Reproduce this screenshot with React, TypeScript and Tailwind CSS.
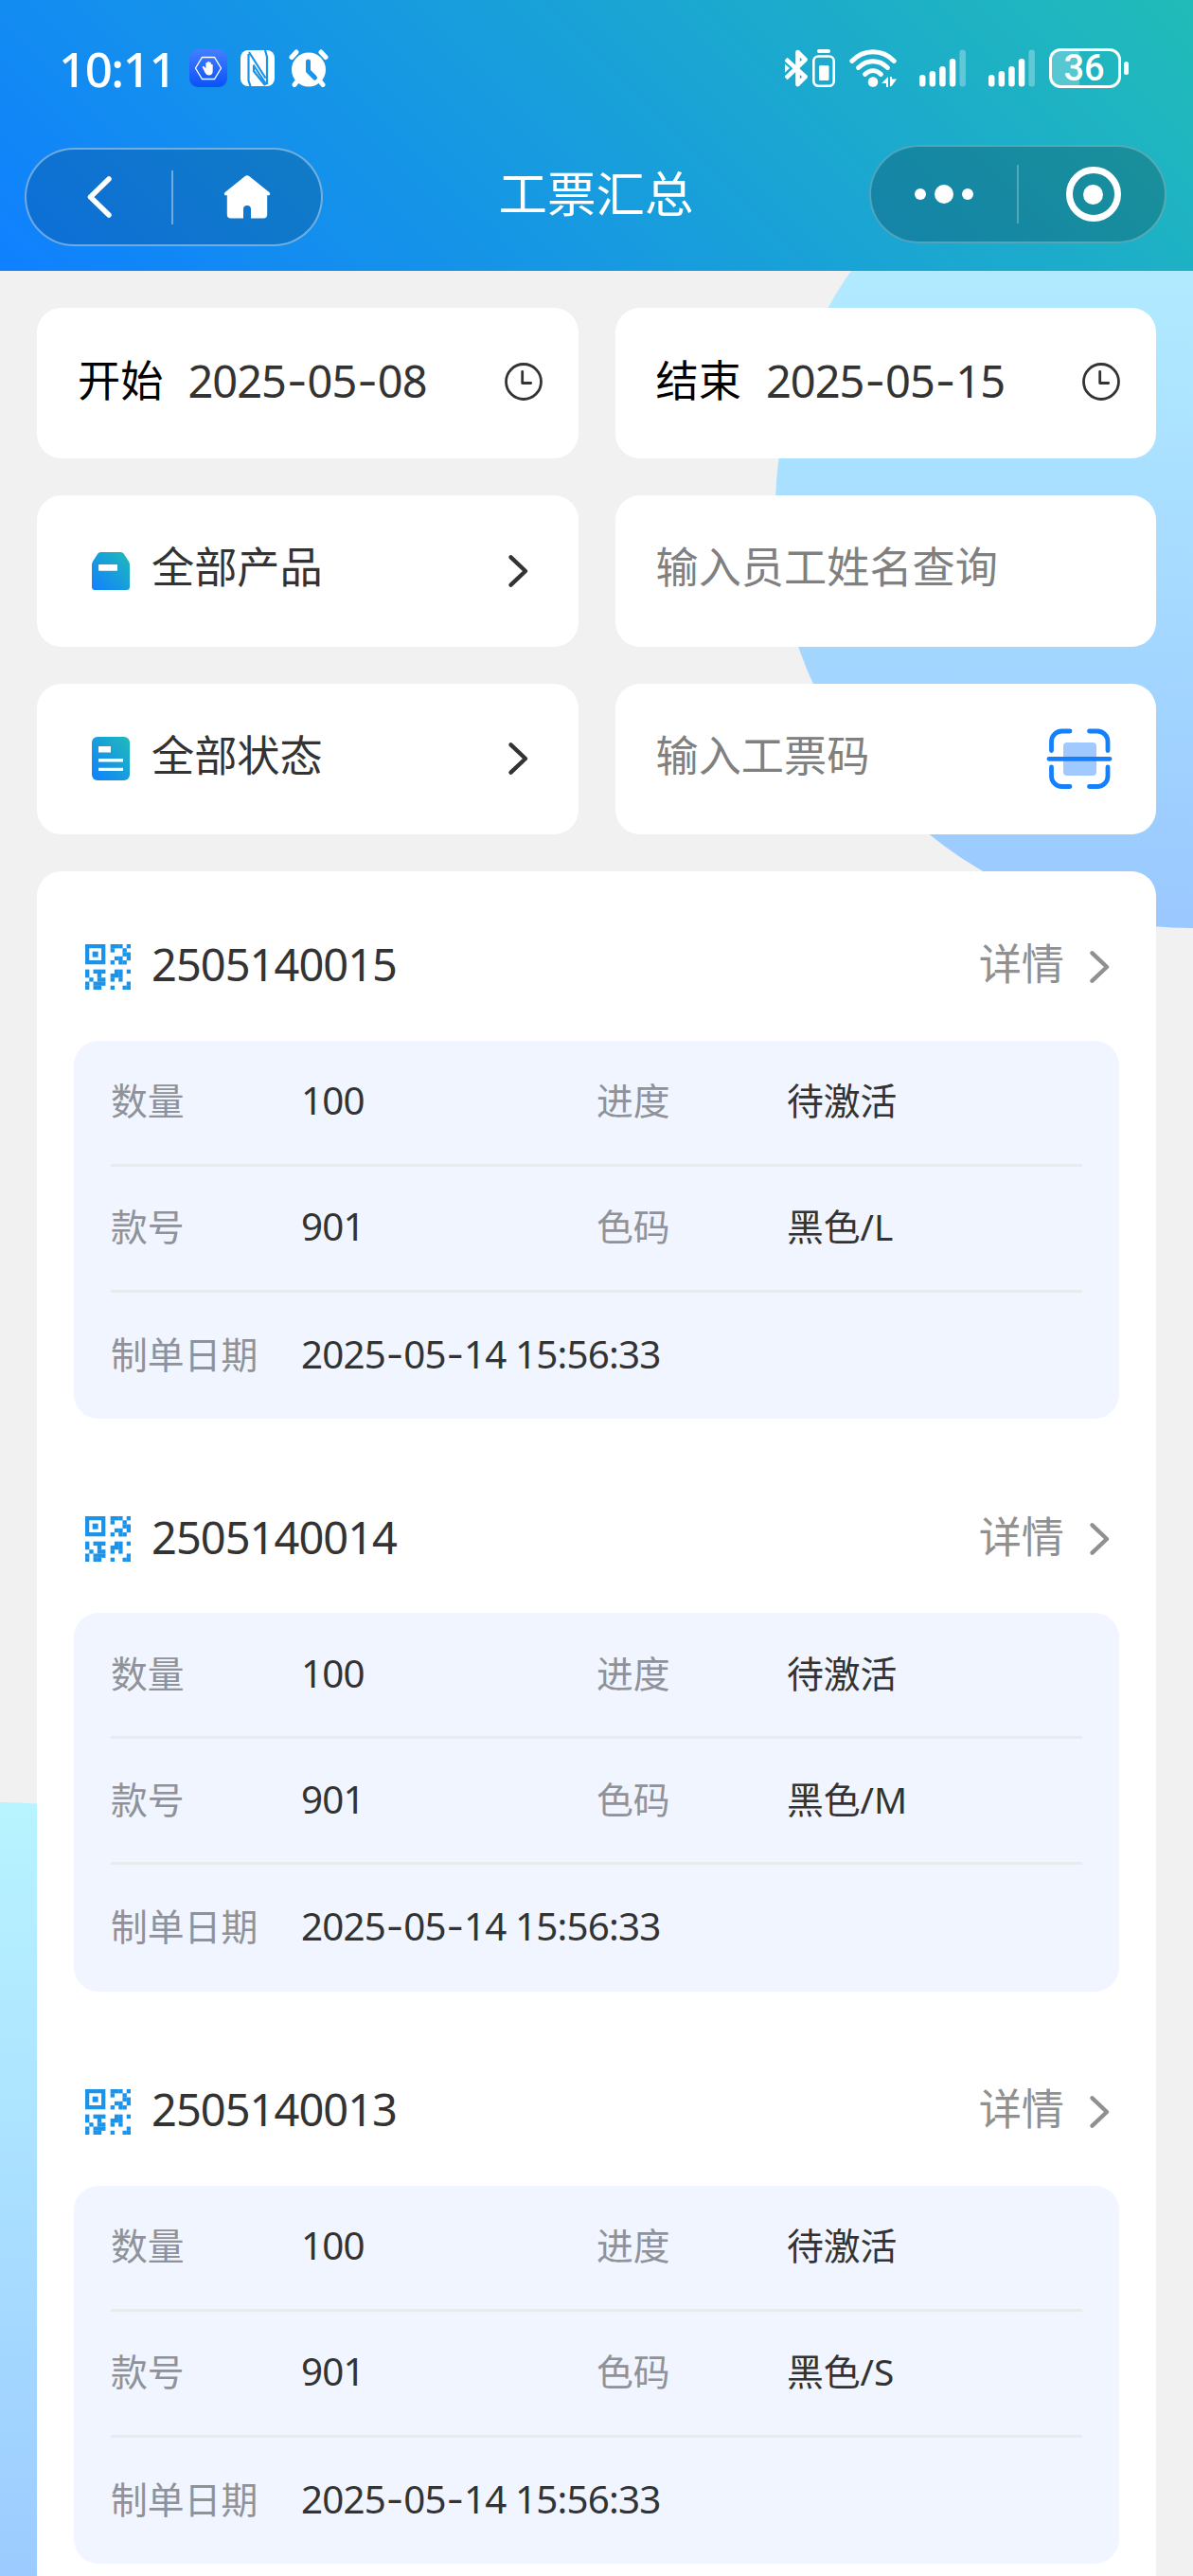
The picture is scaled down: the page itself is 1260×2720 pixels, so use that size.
import React from "react";

interface Ticket {
    code: string;
    quantity: string;
    progress: string;
    styleNo: string;
    colorSize: string;
    createdAt: string;
}

const tickets: Ticket[] = [
    {
        code: "2505140015",
        quantity: "100",
        progress: "待激活",
        styleNo: "901",
        colorSize: "黑色/L",
        createdAt: "2025-05-14 15:56:33",
    },
    {
        code: "2505140014",
        quantity: "100",
        progress: "待激活",
        styleNo: "901",
        colorSize: "黑色/M",
        createdAt: "2025-05-14 15:56:33",
    },
    {
        code: "2505140013",
        quantity: "100",
        progress: "待激活",
        styleNo: "901",
        colorSize: "黑色/S",
        createdAt: "2025-05-14 15:56:33",
    },
];

/**
 * The three data blocks of the QR glyph, one string per row of modules.
 */
const qrBlocks = [
    { x: 25, y: 0, rows: ["11101", "10010", "00011", "01101", "10110"] },
    { x: 0, y: 25, rows: ["10111", "10010", "01011", "10111", "10110"] },
    { x: 25, y: 25, rows: ["01101", "11100", "10100", "00001", "10011"] },
];

const QrIcon = () => (
    <svg className="h-[48px] w-[48px] shrink-0" viewBox="0 0 45 45" fill="#1b93e8">
        <path fillRule="evenodd" d="M0 0h20v20H0zM4 4v12h12V4z" />
        <rect x="7.2" y="7.2" width="5.6" height="5.6" />
        {qrBlocks.map((block) =>
            block.rows.map((row, r) =>
                row
                    .split("")
                    .map((cell, c) =>
                        cell === "1" ? (
                            <rect
                                key={`${block.x}-${block.y}-${r}-${c}`}
                                x={block.x + c * 4}
                                y={block.y + r * 4}
                                width="4.1"
                                height="4.1"
                            />
                        ) : null
                    )
            )
        )}
    </svg>
);

const ChevronIcon = ({ color }: { color: string }) => (
    <svg className="h-[38px] w-[24px] shrink-0" viewBox="0 0 24 38" fill="none">
        <path
            d="M3.500 4.300 19 19 3.500 33.700"
            stroke={color}
            strokeWidth="4.4"
            strokeLinecap="round"
            strokeLinejoin="round"
        />
    </svg>
);

const ClockIcon = () => (
    <svg className="h-[40px] w-[40px] shrink-0" viewBox="0 0 40 40" fill="none" stroke="#333">
        <circle cx="20" cy="20" r="18.5" strokeWidth="2.8" />
        <path d="M18.7 9.5v12h9" strokeWidth="2.8" strokeLinecap="round" strokeLinejoin="round" />
    </svg>
);

const ScanIcon = () => (
    <svg className="h-[66px] w-[70px] shrink-0" viewBox="0 0 70 66" fill="none">
        <rect x="18" y="16" width="35" height="35" rx="4" fill="#a0c9ff" />
        <g stroke="#1680fb" strokeWidth="4.8" strokeLinecap="round">
            <path d="M5.5 24.5V15A11 11 0 0 1 16.500 4H25" />
            <path d="M45.500 4H54A11 11 0 0 1 65 15v9.500" />
            <path d="M5.500 42v9.500a11 11 0 0 0 11 11H25" />
            <path d="M45.500 62.500H54a11 11 0 0 0 11-11V42" />
            <path d="M3 33.300h64" />
        </g>
    </svg>
);

const BoxIcon = () => (
    <svg className="h-[40px] w-[40px] shrink-0" viewBox="0 0 40 40">
        <defs>
            <linearGradient id="box" x1="0" y1="1" x2="1" y2="0">
                <stop stopColor="#1080ff" />
                <stop offset="1" stopColor="#20bbb8" />
            </linearGradient>
        </defs>
        <path
            d="M9.500 0h21a4 4 0 0 1 3.300 1.800l5 7.700A7 7 0 0 1 40 13v23.500a3.500 3.500 0 0 1-3.500 3.500h-33A3.500 3.500 0 0 1 0 36.500V13a7 7 0 0 1 1.200-3.500l5-7.700A4 4 0 0 1 9.500 0z"
            fill="url(#box)"
        />
        <rect x="7" y="13" width="20" height="6.800" rx="0.800" fill="#fff" />
    </svg>
);

const DocIcon = () => (
    <svg className="h-[46px] w-[40px] shrink-0" viewBox="0 0 40 46">
        <defs>
            <linearGradient id="doc" x1="0" y1="1" x2="1" y2="0">
                <stop stopColor="#1080ff" />
                <stop offset="1" stopColor="#20bbb8" />
            </linearGradient>
        </defs>
        <rect width="40" height="46" rx="6" fill="url(#doc)" />
        <path d="M7 10h13v6.500H7zM7 23h26v3.400H7zM7 32.700h26v3.400H7z" fill="#fff" />
    </svg>
);

const SignalIcon = () => (
    <svg className="h-[40px] w-[49px] shrink-0" viewBox="0 0 49 40" fill="#fff">
        <rect x="0" y="27" width="6.500" height="12.500" rx="3.200" />
        <rect x="10.600" y="23" width="6.500" height="16.500" rx="3.200" />
        <rect x="21.200" y="18" width="6.500" height="21.500" rx="3.200" />
        <rect x="31.800" y="10" width="6.500" height="29.500" rx="3.200" />
        <rect x="42.400" y="0.500" width="6.500" height="39" rx="3.200" fillOpacity="0.300" />
    </svg>
);

const StatusBar = () => (
    <div className="flex h-[40px] items-center text-white">
        <span className="-ml-[3px] w-[123px] whitespace-nowrap text-[51px] leading-[40px] font-medium tracking-[-1.500px] font-['Noto_Sans']">
            10:11
        </span>
        <svg className="ml-[15px] h-[40px] w-[40px] shrink-0" viewBox="0 0 40 40">
            <defs>
                <linearGradient id="guard" x1="0" y1="0" x2="0" y2="1">
                    <stop stopColor="#437fff" />
                    <stop offset="1" stopColor="#0a52f8" />
                </linearGradient>
            </defs>
            <rect width="40" height="40" rx="9" fill="url(#guard)" />
            <path d="M13.500 8.500h13L33.500 20l-7 11.500h-13L6.500 20z" fill="none" stroke="#fff" strokeWidth="1.300" />
            <path
                d="M14 19.500c-1-.9.400-2.200 1.700-1l1.700 1.800V15c0-1.500 1.600-1.500 1.700 0v-1.300c.1-1.400 1.700-1.400 1.800 0v.9c.1-1.400 1.800-1.400 1.900 0v2c.2-1.200 1.900-1.100 1.900.200V23c0 3-1.400 4.400-4 4.400-2 0-3.100-.8-4.200-2.900z"
                fill="#fff"
            />
        </svg>
        <svg className="ml-[14px] h-[38px] w-[36px] shrink-0" viewBox="0 0 36 38">
            <rect width="36" height="38" rx="8" fill="#fff" />
            <path
                d="M10.500 38 8.500 32V4M9 2l17.500 27.500M13.500 15.500l14 21M14 17v5l12 15M26 0l2 7v29"
                fill="none"
                stroke="#1a93ea"
                strokeWidth="2.200"
            />
        </svg>
        <svg className="ml-[15px] h-[40px] w-[42px] shrink-0" viewBox="0 0 42 40">
            <circle cx="21" cy="21.500" r="18" fill="#fff" />
            <path
                d="M3 8.500 8 3M39 8.500 34 3M9.500 33 6 37.500M32.500 33l3.500 4.500"
                stroke="#fff"
                strokeWidth="5"
                strokeLinecap="round"
            />
            <path
                d="M20.500 13v10l7 7"
                fill="none"
                stroke="#1a93ea"
                strokeWidth="5"
                strokeLinecap="round"
                strokeLinejoin="round"
            />
        </svg>

        <svg className="ml-auto h-[40px] w-[24px] shrink-0" viewBox="0 0 24 40" fill="none">
            <path
                d="M1 10.500 21.500 29 13.500 37V3L21.500 11 1 30.500"
                stroke="#fff"
                strokeWidth="4.600"
                strokeLinejoin="round"
            />
            <path d="M0 15.500 5 20l-5 4.500z" fill="#fff" />
        </svg>
        <svg className="ml-[5px] h-[40px] w-[24px] shrink-0" viewBox="0 0 24 40" fill="#fff">
            <rect x="5" y="0" width="14" height="4" rx="2" />
            <rect x="1.300" y="7.500" width="21.400" height="31.200" rx="5" fill="none" stroke="#fff" strokeWidth="2.600" />
            <rect x="7" y="17" width="10.500" height="16" rx="1.500" />
        </svg>
        <svg className="ml-[15px] h-[40px] w-[50px] shrink-0" viewBox="0 0 50 40" fill="none">
            <g stroke="#fff" strokeWidth="4.800" strokeLinecap="round">
                <path d="M2.800 12.500c12.500-13 32-13 44.500 0" />
                <path d="M9.500 19.500c9-9 22-9 31 0" />
                <path d="M16.500 26.500c5-5.300 12-5.300 17 0" />
            </g>
            <circle cx="25" cy="34.500" r="5.300" fill="#fff" />
            <path d="M41 29v11h-2v-4h-5zM43 39.500V29l2 0v2.500h5l-5 7z" fill="#fff" />
        </svg>
        <div className="ml-[24px] flex gap-[24px]">
            <SignalIcon />
            <SignalIcon />
        </div>
        <div className="mr-[1px] ml-[15px] flex items-center gap-[3px]">
            <div className="flex h-[42px] w-[76px] items-center justify-center rounded-[12px] border-[3.500px] border-white bg-[linear-gradient(90deg,rgba(255,255,255,0.25)_41%,transparent_41%)] pr-[2px] font-['Roboto'] text-[38px] leading-[36px] font-medium">
                36
            </div>
            <div className="h-[14px] w-[5px] rounded-full bg-white" />
        </div>
    </div>
);

const NavBar = () => (
    <div className="flex items-start justify-between text-white">
        <div className="mt-[3px] flex h-[104px] w-[315px] items-center rounded-full border-2 border-white/40 bg-black/15">
            <div className="flex w-[153px] justify-center">
                <svg className="h-[46px] w-[28px]" viewBox="0 0 28 46" fill="none">
                    <path
                        d="M24 4 4.500 23 24 42"
                        stroke="#fff"
                        strokeWidth="5.500"
                        strokeLinecap="round"
                        strokeLinejoin="round"
                    />
                </svg>
            </div>
            <div className="h-[57px] w-[2px] bg-white/40" />
            <div className="flex flex-1 justify-center">
                <svg className="h-[46px] w-[50px]" viewBox="0 0 50 46" fill="#fff">
                    <path d="M22.500 1.200a4 4 0 0 1 5 0L48.300 18c1.700 1.500.800 3.300-1.300 3.300h-.8v20.200a4 4 0 0 1-4 4H29V36a4 4 0 0 0-8 0v9.500H7.800a4 4 0 0 1-4-4V21.300H3c-2.100 0-3-1.800-1.300-3.300z" />
                </svg>
            </div>
        </div>
        <h1 className="mt-[21px] text-[51.500px] leading-[60px] font-normal">工票汇总</h1>
        <div className="flex h-[104px] w-[314px] items-center rounded-full border-2 border-white/25 bg-black/20">
            <div className="flex w-[154px] items-center justify-center gap-[9px]">
                <i className="h-[12px] w-[12px] rounded-full bg-white" />
                <i className="h-[20px] w-[20px] rounded-full bg-white" />
                <i className="h-[12px] w-[12px] rounded-full bg-white" />
            </div>
            <div className="h-[62px] w-[2px] bg-white/25" />
            <div className="flex w-[154px] justify-center pl-[4px]">
                <div className="flex h-[58px] w-[58px] items-center justify-center rounded-full border-[7.500px] border-white">
                    <div className="h-[21px] w-[21px] rounded-full bg-white" />
                </div>
            </div>
        </div>
    </div>
);

/**
 * Numbers and dates: slightly taller digits, and hyphens wider than the
 * digit font has.
 */
const Digits = ({ value }: { value: string }) => (
    <span className="text-[1.040em] tracking-[-0.021em] whitespace-pre">
        {value.split(/(-)/).map((part, i) =>
            part === "-" ? (
                <span key={i} className="mx-[0.020em] font-['Inter']">
                    -
                </span>
            ) : (
                part
            )
        )}
    </span>
);

const FilterCard = ({ children }: { children: React.ReactNode }) => (
    <div className="flex h-[159.200px] items-center rounded-[26px] bg-white pr-[38px] pl-[43px] text-[45.200px] leading-[60px] text-[#333]">
        {children}
    </div>
);

const Filters = () => (
    <div className="grid grid-cols-2 gap-x-[39px] gap-y-[39.200px]">
        <FilterCard>
            <span className="pb-[5px] text-black">开始</span>
            <span className="ml-[26px] pb-[5px]">
                <Digits value="2025-05-08" />
            </span>
            <span className="ml-auto pb-[3px]">
                <ClockIcon />
            </span>
        </FilterCard>
        <FilterCard>
            <span className="pb-[5px] text-black">结束</span>
            <span className="ml-[26px] pb-[5px]">
                <Digits value="2025-05-15" />
            </span>
            <span className="ml-auto pb-[3px]">
                <ClockIcon />
            </span>
        </FilterCard>
        <FilterCard>
            <span className="mr-[23px] ml-[15px]">
                <BoxIcon />
            </span>
            <span className="pb-[7px]">全部产品</span>
            <span className="mr-[13px] ml-auto">
                <ChevronIcon color="#333" />
            </span>
        </FilterCard>
        <FilterCard>
            <span className="pb-[8px] text-[#808080]">输入员工姓名查询</span>
        </FilterCard>
        <FilterCard>
            <span className="mr-[23px] ml-[15px]">
                <DocIcon />
            </span>
            <span className="pb-[7px]">全部状态</span>
            <span className="mr-[13px] ml-auto">
                <ChevronIcon color="#333" />
            </span>
        </FilterCard>
        <FilterCard>
            <span className="pb-[7px] text-[#808080]">输入工票码</span>
            <span className="mr-[8px] ml-auto">
                <ScanIcon />
            </span>
        </FilterCard>
    </div>
);

const Field = ({ label, children }: { label: string; children: React.ReactNode }) => (
    <div className="flex pb-[3px]">
        <span className="w-[201px] text-[#8f9299]">{label}</span>
        <span className="text-[#333]">{children}</span>
    </div>
);

const TicketCard = ({ ticket }: { ticket: Ticket }) => (
    <div className="mb-[26px]">
        <div className="flex h-[179px] items-center pt-[23px] pr-[8px] pl-[12px] text-[45.200px] leading-[60px]">
            <QrIcon />
            <span className="ml-[22px] pb-[4px] text-[#333]">
                <Digits value={ticket.code} />
            </span>
            <span className="ml-auto pb-[5px] text-[#909090]">详情</span>
            <span className="ml-[26px]">
                <ChevronIcon color="#909090" />
            </span>
        </div>
        <div className="rounded-[26px] bg-[#f0f5ff] px-[39px] text-[38.800px] leading-[56px]">
            <div className="grid h-[133px] grid-cols-2 items-center border-b-[3px] border-[#e9eaec]">
                <Field label="数量">
                    <Digits value={ticket.quantity} />
                </Field>
                <Field label="进度">{ticket.progress}</Field>
            </div>
            <div className="grid h-[133px] grid-cols-2 items-center border-b-[3px] border-[#e9eaec]">
                <Field label="款号">
                    <Digits value={ticket.styleNo} />
                </Field>
                <Field label="色码">{ticket.colorSize}</Field>
            </div>
            <div className="flex h-[133.500px] items-center">
                <Field label="制单日期">
                    <Digits value={ticket.createdAt} />
                </Field>
            </div>
        </div>
    </div>
);

const App = () => (
    <div className="relative h-[2720px] w-[1260px] overflow-hidden bg-[#f1f1f1] font-['Noto_Sans','Noto_Sans_CJK_SC',sans-serif]">
        {/* Decorative circles behind the content */}
        <div className="absolute top-[98px] left-[819px] h-[882px] w-[882px] rounded-full bg-linear-to-b from-[#b8f4ff] to-[#9ac8ff]" />
        <div className="absolute top-[1903px] left-[-441px] h-[882px] w-[882px] rounded-full bg-linear-to-b from-[#b8f4ff] to-[#9ac8ff]" />

        <div className="relative">
            <header className="h-[286px] bg-[linear-gradient(45deg,#0f80ff,#21bcb8)] pt-[52px]">
                <div className="pr-[67px] pl-[65px]">
                    <StatusBar />
                </div>
                <div className="mt-[61px] pr-[28px] pl-[26px]">
                    <NavBar />
                </div>
            </header>
            <main className="px-[39px] pt-[39px]">
                <Filters />
                <div className="mt-[39px] rounded-t-[26px] bg-white px-[39px] pb-[40px]">
                    {tickets.map((ticket) => (
                        <TicketCard key={ticket.code} ticket={ticket} />
                    ))}
                </div>
            </main>
        </div>
    </div>
);

export default App;
